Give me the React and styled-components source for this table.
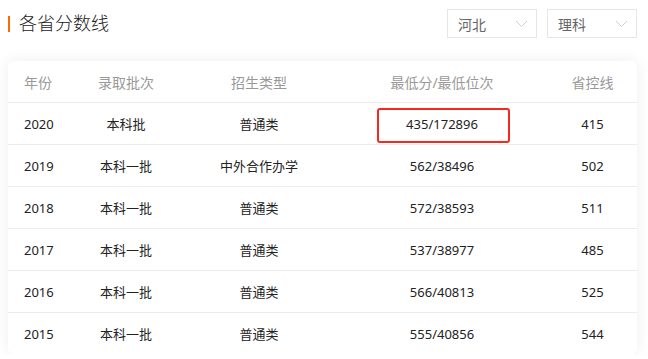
import React from "react";
import styled, { createGlobalStyle } from "styled-components";

const Global = createGlobalStyle`
  html, body { margin: 0; padding: 0; background: #fff; }
  body { font-family: "Noto Sans", "Noto Sans CJK SC", sans-serif; color: #333; }
`;

const Page = styled.div`
  width: 648px;
  padding: 9px 11px 0 8px;
  box-sizing: border-box;
`;

const Head = styled.div`
  display: flex;
  align-items: center;
  justify-content: space-between;
  height: 29px;
`;

const Title = styled.h2`
  margin: 0;
  display: flex;
  align-items: center;
  gap: 9px;
  font-size: 18px;
  font-weight: 300;
  color: #222;
  line-height: 29px;
  &::before {
    content: "";
    width: 2px;
    height: 16px;
    background: #ff6a00;
  }
`;

const Selects = styled.div`
  display: flex;
  gap: 10px;
`;

const Select = styled.div`
  width: 90px;
  height: 29px;
  box-sizing: border-box;
  border: 1px solid #e6e6e6;
  display: flex;
  align-items: center;
  justify-content: space-between;
  padding: 0 8px 0 10px;
  font-size: 14px;
  color: #666;
`;

const Card = styled.div`
  margin-top: 23px;
  background: #fff;
  border-radius: 6px;
  box-shadow: 0 0 16px rgba(0, 0, 0, 0.07);
  overflow: hidden;
`;

const Row = styled.div`
  display: grid;
  grid-template-columns: 72px 92px 174px 192px 1fr;
  height: ${(p) => (p.$head ? 41 : 42)}px;
  align-items: center;
  font-size: ${(p) => (p.$head ? 14 : 13)}px;
  color: ${(p) => (p.$head ? "#999" : "#222")};
  border-top: ${(p) => (p.$head ? "none" : "1px solid #ececec")};
  box-sizing: border-box;
`;

const Cell = styled.div`
  position: relative;
  padding-left: ${(p) => (p.$left ? 16 : p.$pad || 0)}px;
  height: 100%;
  display: flex;
  align-items: center;
  justify-content: ${(p) => (p.$left ? "flex-start" : "center")};
`;

const Mark = styled.div`
  position: absolute;
  left: 31px;
  top: 5px;
  width: 133px;
  height: 35px;
  box-sizing: border-box;
  border: 2px solid #f52a1c;
  border-radius: 3px;
`;

const Chevron = () => (
  <svg width="13" height="8" viewBox="0 0 13 8">
    <path d="M1 1l5.5 5.5L12 1" fill="none" stroke="#cfcfcf" strokeWidth="1" />
  </svg>
);

const data = [
  ["2020", "本科批", "普通类", "435/172896", "415", true],
  ["2019", "本科一批", "中外合作办学", "562/38496", "502"],
  ["2018", "本科一批", "普通类", "572/38593", "511"],
  ["2017", "本科一批", "普通类", "537/38977", "485"],
  ["2016", "本科一批", "普通类", "566/40813", "525"],
  ["2015", "本科一批", "普通类", "555/40856", "544"],
];

export default function App() {
  return (
    <Page>
      <Global />
      <Head>
        <Title>各省分数线</Title>
        <Selects>
          <Select>河北<Chevron /></Select>
          <Select>理科<Chevron /></Select>
        </Selects>
      </Head>
      <Card>
        <Row $head>
          <Cell $left>年份</Cell>
          <Cell>录取批次</Cell>
          <Cell>招生类型</Cell>
          <Cell>最低分/最低位次</Cell>
          <Cell $pad={10}>省控线</Cell>
        </Row>
        {data.map((r) => (
          <Row key={r[0]}>
            <Cell $left>{r[0]}</Cell>
            <Cell>{r[1]}</Cell>
            <Cell>{r[2]}</Cell>
            <Cell>
              {r[5] && <Mark />}
              {r[3]}
            </Cell>
            <Cell $pad={10}>{r[4]}</Cell>
          </Row>
        ))}
      </Card>
    </Page>
  );
}
